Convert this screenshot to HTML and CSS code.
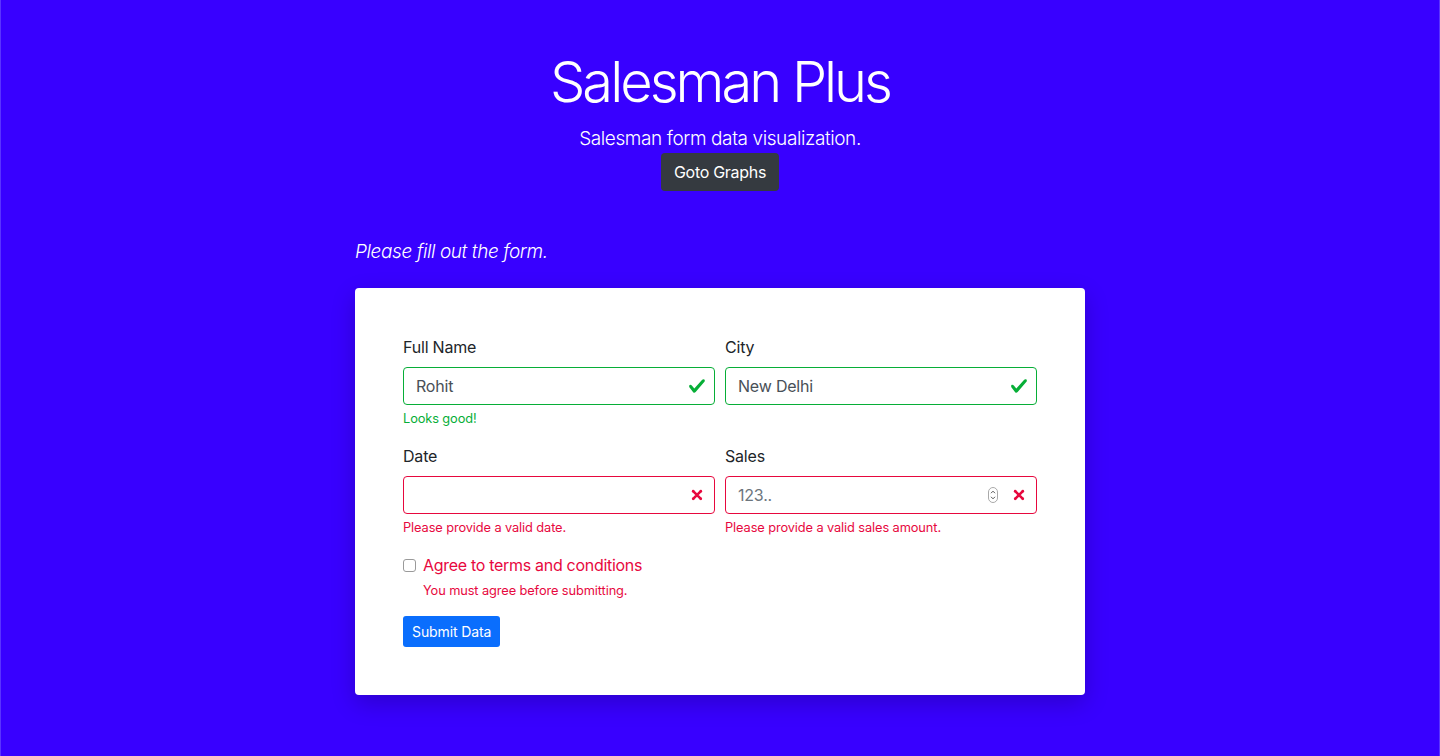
FILE: index.html
```html
<!DOCTYPE html>
<html lang="en">
<head>
<meta charset="utf-8">
<title>Salesman Plus</title>
<link rel="stylesheet" href="styles.css">
</head>
<body>
<div class="page">
  <header class="hero">
    <h1 class="title">Salesman Plus</h1>
    <p class="lead">Salesman form data visualization.</p>
    <a class="btn btn-dark" href="#">Goto Graphs</a>
  </header>

  <main class="main">
    <p class="intro">Please fill out the form.</p>
    <form class="card">
      <div class="row">
        <div class="group">
          <label class="label">Full Name</label>
          <div class="field valid">
            <input class="input" type="text" value="Rohit">
            <svg class="icon" viewBox="0 0 8 8" width="18" height="18"><path fill="currentColor" d="M2.3 6.73L.6 4.53c-.4-1.04.46-1.4 1.1-.8l1.1 1.4 3.4-3.8c.6-.63 1.6-.27 1.2.7l-4 4.6c-.43.5-.8.4-1.1.1z"/></svg>
          </div>
          <div class="feedback ok">Looks good!</div>
        </div>
        <div class="group">
          <label class="label">City</label>
          <div class="field valid">
            <input class="input" type="text" value="New Delhi">
            <svg class="icon" viewBox="0 0 8 8" width="18" height="18"><path fill="currentColor" d="M2.3 6.73L.6 4.53c-.4-1.04.46-1.4 1.1-.8l1.1 1.4 3.4-3.8c.6-.63 1.6-.27 1.2.7l-4 4.6c-.43.5-.8.4-1.1.1z"/></svg>
          </div>
        </div>
      </div>

      <div class="row">
        <div class="group">
          <label class="label">Date</label>
          <div class="field invalid">
            <input class="input" type="text" value="">
            <svg class="icon" viewBox="-2 -2 7 7" width="18" height="18"><path stroke="currentColor" d="M0 0l3 3m0-3L0 3"/><g fill="currentColor"><circle r=".5"/><circle cx="3" r=".5"/><circle cy="3" r=".5"/><circle cx="3" cy="3" r=".5"/></g></svg>
          </div>
          <div class="feedback bad">Please provide a valid date.</div>
        </div>
        <div class="group">
          <label class="label">Sales</label>
          <div class="field invalid">
            <input class="input" type="text" placeholder="123..">
            <span class="spinner"><svg viewBox="0 0 10 16" width="10" height="16"><rect x=".5" y=".5" width="9" height="15" rx="4.5" fill="#fff" stroke="#a9a9a9"/><path d="M3 6.2L5 4.2 7 6.2M3 9.8L5 11.8 7 9.8" fill="none" stroke="#555" stroke-width="1"/></svg></span>
            <svg class="icon" viewBox="-2 -2 7 7" width="18" height="18"><path stroke="currentColor" d="M0 0l3 3m0-3L0 3"/><g fill="currentColor"><circle r=".5"/><circle cx="3" r=".5"/><circle cy="3" r=".5"/><circle cx="3" cy="3" r=".5"/></g></svg>
          </div>
          <div class="feedback bad">Please provide a valid sales amount.</div>
        </div>
      </div>

      <div class="check-group">
        <label class="check">
          <input class="checkbox" type="checkbox">
          <span class="check-label">Agree to terms and conditions</span>
        </label>
        <div class="feedback bad check-feedback">You must agree before submitting.</div>
      </div>

      <button class="btn btn-primary btn-sm" type="button">Submit Data</button>
    </form>
  </main>
</div>
</body>
</html>
```

FILE: styles.css
```css
* { box-sizing: border-box; }

html, body {
  margin: 0;
  padding: 0;
}

body {
  background: #3800ff;
  font-family: Inter, "Liberation Sans", Arial, sans-serif;
  font-size: 16px;
  line-height: 1.5;
  color: #212529;
  min-height: 756px;
}

.page {
  min-height: 756px;
  border-left: 1px solid #5a33ff;
  border-right: 1px solid #5a33ff;
}

.hero {
  display: flex;
  flex-direction: column;
  align-items: center;
  padding-top: 49px;
  color: #fff;
}

.title {
  margin: 0 0 8px;
  font-size: 56px;
  font-weight: 300;
  line-height: 1.2;
  letter-spacing: -3px;
}

.lead {
  margin: 0 0 -1px;
  font-size: 19px;
  font-weight: 300;
  line-height: 30px;
  letter-spacing: -0.4px;
}

.btn {
  display: inline-block;
  border: 1px solid transparent;
  border-radius: 4px;
  font-family: inherit;
  text-decoration: none;
  cursor: pointer;
}

.btn-dark {
  background: #353a40;
  color: #fff;
  font-size: 16px;
  line-height: 24px;
  padding: 6px 12px;
  letter-spacing: -0.3px;
}

.main {
  width: 730px;
  margin: 46px auto 0;
}

.intro {
  margin: 0 0 21px;
  color: #fff;
  font-size: 19px;
  font-style: italic;
  font-weight: 300;
  line-height: 30px;
  letter-spacing: -0.4px;
}

.card {
  background: #fff;
  border-radius: 4px;
  padding: 47px 48px 48px;
  box-shadow: 0 8px 24px rgba(0, 0, 0, 0.2);
}

.row {
  display: grid;
  grid-template-columns: 1fr 1fr;
  column-gap: 10px;
}

.group {
  margin-bottom: 16px;
}

.label {
  display: block;
  margin-bottom: 8px;
  font-size: 16px;
  line-height: 24px;
  letter-spacing: -0.2px;
}

.field {
  position: relative;
}

.input {
  display: block;
  width: 100%;
  height: 38px;
  padding: 6px 36px 6px 12px;
  font-family: inherit;
  font-size: 16px;
  line-height: 24px;
  color: #495057;
  background: #fff;
  border: 1px solid #ced4da;
  border-radius: 4px;
  outline: none;
  letter-spacing: -0.2px;
}

.input::placeholder {
  color: #6c757d;
}

.valid .input { border-color: #07ae37; }
.invalid .input { border-color: #e7083e; }

.icon {
  position: absolute;
  right: 9px;
  top: 10px;
}

.valid .icon { color: #07ae37; }
.invalid .icon { color: #e7083e; }

.spinner {
  position: absolute;
  right: 39px;
  top: 11px;
  display: flex;
}

.feedback {
  margin-top: 4px;
  font-size: 12.8px;
  line-height: 19px;
  letter-spacing: -0.1px;
}

.ok { color: #07ae37; }
.bad { color: #e7083e; }

.check-group {
  margin-bottom: 16px;
}

.check {
  display: flex;
  align-items: center;
  height: 24px;
}

.checkbox {
  -webkit-appearance: none;
  appearance: none;
  width: 13px;
  height: 13px;
  margin: 0 7px 0 0;
  border: 1px solid #9a9a9a;
  border-radius: 3px;
  background: #fff;
}

.check-label {
  color: #e7083e;
  font-size: 16px;
  line-height: 24px;
  letter-spacing: -0.3px;
}

.check-feedback {
  margin-left: 20px;
}

.btn-primary {
  background: #0a6efd;
  color: #fff;
}

.btn-sm {
  font-size: 14px;
  line-height: 21px;
  padding: 4px 8px;
  border-radius: 3px;
  letter-spacing: -0.1px;
}
```
